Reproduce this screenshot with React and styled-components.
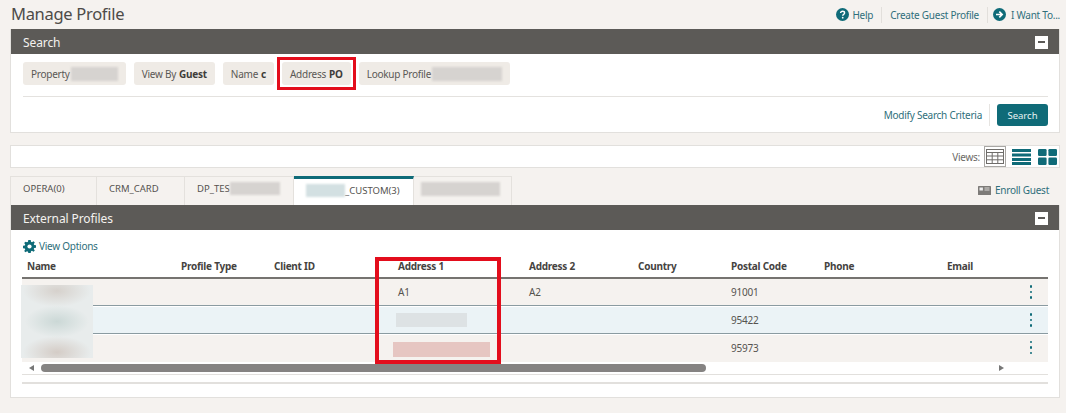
import React from "react";
import styled, { createGlobalStyle } from "styled-components";

const teal = "#0f6b78";
const linkText = "#2f6f7b";

const GlobalStyle = createGlobalStyle`
  html, body {
    margin: 0;
    padding: 0;
    background: #f5f2ef;
  }
  body {
    font-family: "Noto Sans", "Open Sans", "Liberation Sans", sans-serif;
    font-size: 10px;
    letter-spacing: -0.25px;
    color: #4a4845;
  }
`;

const Page = styled.div`
  position: relative;
  width: 1066px;
  height: 413px;
  overflow: hidden;
  box-sizing: border-box;
  padding: 0 6px 0 10px;
`;

const TopBar = styled.div`
  height: 29px;
  display: flex;
  align-items: center;
  justify-content: space-between;
`;

const PageTitle = styled.h1`
  margin: 0 0 0 1px;
  font-size: 16.5px;
  font-weight: 400;
  letter-spacing: -0.3px;
  color: #4d4b48;
  position: relative;
  top: -1px;
`;

const TopLinks = styled.div`
  display: flex;
  align-items: center;
`;

const TopLink = styled.a`
  display: flex;
  align-items: center;
  gap: 3px;
  height: 16px;
  padding: 0 8px;
  color: ${linkText};
  font-size: 10px;
  border-left: ${(p) => (p.$divided ? "1px solid #e2dfdb" : "none")};
  &:last-child {
    gap: 5px;
    padding-right: 0;
    padding-left: 5px;
  }
`;

const Panel = styled.section`
  background: #fff;
  border: 1px solid #e2e0dd;
  border-top: none;
  box-sizing: border-box;
  height: ${(p) => p.$height}px;
`;

const PanelHeader = styled.div`
  height: 25px;
  box-sizing: border-box;
  background: #5c5a57;
  display: flex;
  align-items: center;
  justify-content: space-between;
  padding: 1px 11px 0 12px;
  color: #f4f2ef;
  font-size: 12px;
  letter-spacing: -0.1px;
`;

const Collapse = styled.span`
  width: 13px;
  height: 13px;
  background: #fff;
  display: flex;
  align-items: center;
  justify-content: center;
  &::before {
    content: "";
    width: 7px;
    height: 2px;
    background: #5c5a57;
  }
`;

const ChipRow = styled.div`
  display: flex;
  align-items: center;
  gap: 8px;
  padding: 8px 0 0 12px;
  height: 23px;
`;

const Chip = styled.div`
  position: relative;
  height: 23px;
  box-sizing: border-box;
  display: flex;
  align-items: center;
  gap: ${(p) => p.$gap ?? 3}px;
  padding: 0 8px;
  background: #efebe6;
  border-radius: 3px;
  font-size: 10px;
  color: #5a5855;
  b {
    font-weight: 700;
    color: #3f3d3a;
  }
  ${(p) =>
    p.$flagged &&
    `
    &::after {
      content: "";
      position: absolute;
      inset: -5px;
      border: 3.5px solid #e30d1c;
    }
  `}
`;

const Smudge = styled.span`
  display: block;
  width: ${(p) => p.$w}px;
  height: ${(p) => p.$h ?? 14}px;
  background: ${(p) => p.$color ?? "#d6d3d0"};
  filter: blur(1px);
`;

const Rule = styled.div`
  height: 1px;
  background: #e4e2df;
  margin: 11px 11px 0 12px;
`;

const SearchFooter = styled.div`
  display: flex;
  justify-content: flex-end;
  align-items: center;
  padding: 7px 11px 0 0;
`;

const PlainLink = styled.a`
  color: ${linkText};
  font-size: 10px;
`;

const FooterDivider = styled.span`
  width: 1px;
  height: 22px;
  background: #e6e4e1;
  margin: 0 7px;
`;

const PrimaryButton = styled.button`
  width: 51px;
  height: 22px;
  border: none;
  border-radius: 3px;
  background: ${teal};
  color: #e8f2f3;
  font: inherit;
  font-size: 9.5px;
  padding: 0;
`;

const ViewsBar = styled.div`
  margin-top: 12px;
  height: 23px;
  box-sizing: border-box;
  background: #fff;
  border: 1px solid #e2e0dd;
  display: flex;
  align-items: center;
  justify-content: flex-end;
  padding-right: 1px;
  gap: 4px;
  font-size: 10px;
  color: #6b6966;
`;

const ViewButton = styled.span`
  width: 22px;
  height: 21px;
  display: flex;
  align-items: center;
  justify-content: center;
  box-sizing: border-box;
  border: ${(p) => (p.$active ? "1px solid #a9a7a4" : "none")};
`;

const TabRow = styled.div`
  margin-top: 8px;
  height: 29px;
  display: flex;
  align-items: stretch;
  justify-content: space-between;
`;

const Tabs = styled.div`
  display: flex;
`;

const Tab = styled.div`
  width: ${(p) => p.$w}px;
  box-sizing: border-box;
  padding: 0 0 ${(p) => (p.$active ? 3 : 5)}px ${(p) => p.$pad ?? 12}px;
  display: flex;
  align-items: center;
  font-size: 9.5px;
  letter-spacing: 0;
  color: #55534f;
  background: ${(p) => (p.$active ? "#fff" : "#f5f2ef")};
  border-right: 1px solid #e4e1dd;
  border-top: ${(p) => (p.$active ? `3px solid ${teal}` : "1px solid #e4e1dd")};
  &:first-child {
    border-left: 1px solid #e4e1dd;
  }
`;

const EnrollLink = styled.a`
  display: flex;
  align-items: center;
  gap: 4px;
  padding: 0 11px 1px 0;
  color: ${linkText};
  font-size: 10px;
`;

const ViewOptions = styled.a`
  display: flex;
  align-items: center;
  gap: 3px;
  color: ${linkText};
  font-size: 10px;
  height: 16px;
  padding: 8px 0 0 12px;
`;

const TableHead = styled.div`
  display: grid;
  grid-template-columns: 154px 93px 124px 131px 109px 93px 93px 123px 1fr;
  margin: 4px 11px 0 11px;
  padding: 0 0 3px 5px;
  height: 16px;
  align-items: center;
  border-bottom: 2px solid #757370;
  font-size: 10px;
  font-weight: 700;
  color: #45433f;
`;

const Row = styled.div`
  display: grid;
  grid-template-columns: 154px 93px 124px 131px 109px 93px 93px 123px 1fr 18px;
  margin: 0 11px ${(p) => (p.$last ? 0 : 1)}px;
  padding-bottom: ${(p) => (p.$last ? 2 : 0)}px;
  padding-left: 5px;
  box-sizing: border-box;
  height: ${(p) => (p.$last ? 27 : 27)}px;
  align-items: center;
  font-size: 10px;
  color: #55534f;
  background: ${(p) => (p.$selected ? "#ebf3f6" : "#f5f2ef")};
  border-bottom: ${(p) => (p.$last ? "none" : "1px solid #8a9ba1")};
`;

const Kebab = styled.span`
  display: flex;
  flex-direction: column;
  gap: 3px;
  align-items: center;
  justify-self: center;
  position: relative;
  left: -8px;
  i {
    width: 2.5px;
    height: 2.5px;
    border-radius: 50%;
    background: ${teal};
  }
`;

const ScrollBar = styled.div`
  margin: 0 11px;
  height: 12px;
  width: 983px;
  background: #fff;
  display: flex;
  align-items: center;
  gap: 7px;
  padding: 0 1px 0 7px;
  box-sizing: border-box;
`;

const Arrow = styled.span`
  width: 0;
  height: 0;
  border-top: 3px solid transparent;
  border-bottom: 3px solid transparent;
  border-right: ${(p) => (p.$dir === "left" ? "5px solid #777" : "none")};
  border-left: ${(p) => (p.$dir === "right" ? "5px solid #777" : "none")};
`;

const Thumb = styled.span`
  width: 665px;
  height: 8px;
  background: #858382;
  border-radius: 4px;
  margin-right: auto;
`;

const TableRule = styled.div`
  height: 1px;
  background: #e2e0dd;
  margin: 0 11px;
`;

const TableRuleLow = styled(TableRule)`
  height: 2px;
  margin-top: 7px;
`;

const NameSmudge = styled.div`
  position: absolute;
  left: 21px;
  top: 285px;
  width: 72px;
  height: 73px;
  background:
    radial-gradient(ellipse 32px 16px at 50% 50%, #cbd8d6, transparent),
    radial-gradient(ellipse 34px 16px at 50% 8%, #d6d1cc, transparent),
    radial-gradient(ellipse 34px 16px at 50% 92%, #d4ccc6, transparent),
    #e8ecec;
  filter: blur(0.6px);
`;

const ColumnSmudge = styled.div`
  position: absolute;
  left: ${(p) => p.$x}px;
  top: ${(p) => p.$y}px;
  width: ${(p) => p.$w}px;
  height: ${(p) => p.$h}px;
  background: ${(p) => p.$color};
  filter: blur(0.6px);
`;

const Callout = styled.div`
  position: absolute;
  left: 375px;
  top: 257px;
  width: 126px;
  height: 107px;
  box-sizing: border-box;
  border: 4px solid #e30d1c;
  pointer-events: none;
`;

function HelpIcon() {
  return (
    <svg width="13" height="13" viewBox="0 0 13 13">
      <circle cx="6.5" cy="6.5" r="6.5" fill={teal} />
      <path d="M4.6 5.1c0-1.2.9-1.9 2-1.9s2 .7 2 1.7c0 1.5-1.9 1.5-1.9 2.8" fill="none" stroke="#fff" strokeWidth="1.4" />
      <circle cx="6.7" cy="9.7" r="0.9" fill="#fff" />
    </svg>
  );
}

function ArrowIcon() {
  return (
    <svg width="13" height="13" viewBox="0 0 13 13">
      <circle cx="6.5" cy="6.5" r="6.5" fill={teal} />
      <path d="M3 6.5h6M6.3 3.6l2.9 2.9-2.9 2.9" fill="none" stroke="#fff" strokeWidth="1.6" />
    </svg>
  );
}

function GridIcon() {
  return (
    <svg width="18" height="15" viewBox="0 0 18 15" fill="none" stroke="#6f6d6a" strokeWidth="1">
      <rect x="0.5" y="0.5" width="17" height="14" />
      <path d="M0.5 3.5h17M0.5 7h17M0.5 10.8h17M6.2 3.5v11M11.8 3.5v11" />
    </svg>
  );
}

function ListIcon() {
  return (
    <svg width="19" height="16" viewBox="0 0 19 16" fill={teal}>
      <rect y="0" width="19" height="3" />
      <rect y="4.5" width="19" height="3" />
      <rect y="9" width="19" height="3" />
      <rect y="13" width="19" height="3" />
    </svg>
  );
}

function TilesIcon() {
  return (
    <svg width="19" height="16" viewBox="0 0 19 16" fill={teal}>
      <rect width="8.6" height="7" rx="1.2" />
      <rect x="10.4" width="8.6" height="7" rx="1.2" />
      <rect y="8.6" width="8.6" height="7.4" rx="1.2" />
      <rect x="10.4" y="8.6" width="8.6" height="7.4" rx="1.2" />
    </svg>
  );
}

function CardIcon() {
  return (
    <svg width="13" height="9" viewBox="0 0 13 9">
      <rect width="13" height="9" rx="0.6" fill="#7d7b78" />
      <rect x="1.5" y="1.5" width="3.4" height="3" fill="#eee" />
      <path d="M6.5 2h5M6.5 4h5" stroke="#e5e3e0" strokeWidth="0.9" />
    </svg>
  );
}

function GearIcon() {
  return (
    <svg width="13" height="13" viewBox="0 0 13 13">
      <path
        d="M5.3 0h2.4l.3 1.8 1 .45L10.5 1.2l1.3 1.3-1.05 1.5.45 1 1.8.3v2.4l-1.8.3-.45 1 1.05 1.5-1.3 1.3-1.5-1.05-1 .45-.3 1.8H5.3L5 11.7l-1-.45-1.5 1.05-1.3-1.3L2.25 9.5l-.45-1L0 8.2V5.8l1.8-.3.45-1L1.2 3l1.3-1.3L4 2.25l1-.45z"
        fill={teal}
      />
      <circle cx="6.5" cy="6.5" r="2.1" fill="#fff" />
    </svg>
  );
}

const columns = ["Name", "Profile Type", "Client ID", "Address 1", "Address 2", "Country", "Postal Code", "Phone", "Email"];

const rows = [
  { id: 1, address1: "A1", address2: "A2", postal: "91001" },
  { id: 2, address1: "", address2: "", postal: "95422", selected: true },
  { id: 3, address1: "", address2: "", postal: "95973", last: true },
];

export default function App() {
  return (
    <Page>
      <GlobalStyle />
      <TopBar>
        <PageTitle>Manage Profile</PageTitle>
        <TopLinks>
          <TopLink><HelpIcon />Help</TopLink>
          <TopLink $divided>Create Guest Profile</TopLink>
          <TopLink $divided><ArrowIcon />I Want To...</TopLink>
        </TopLinks>
      </TopBar>

      <Panel $height={104}>
        <PanelHeader>Search<Collapse /></PanelHeader>
        <ChipRow>
          <Chip $gap={1}>Property<Smudge $w={47} /></Chip>
          <Chip>View By <b>Guest</b></Chip>
          <Chip>Name <b>c</b></Chip>
          <Chip $flagged>Address <b>PO</b></Chip>
          <Chip $gap={1}>Lookup Profile<Smudge $w={70} /></Chip>
        </ChipRow>
        <Rule />
        <SearchFooter>
          <PlainLink>Modify Search Criteria</PlainLink>
          <FooterDivider />
          <PrimaryButton>Search</PrimaryButton>
        </SearchFooter>
      </Panel>

      <ViewsBar>
        Views:
        <ViewButton $active><GridIcon /></ViewButton>
        <ViewButton><ListIcon /></ViewButton>
        <ViewButton><TilesIcon /></ViewButton>
      </ViewsBar>

      <TabRow>
        <Tabs>
          <Tab $w={87}>OPERA(0)</Tab>
          <Tab $w={88}>CRM_CARD</Tab>
          <Tab $w={109}>DP_TES<Smudge $w={50} $h={13} /></Tab>
          <Tab $w={120} $active><Smudge $w={39} $h={13} $color="#d3e0e2" />_CUSTOM(3)</Tab>
          <Tab $w={98} $pad={7}><Smudge $w={79} $h={14} /></Tab>
        </Tabs>
        <EnrollLink><CardIcon />Enroll Guest</EnrollLink>
      </TabRow>

      <Panel $height={193}>
        <PanelHeader>External Profiles<Collapse /></PanelHeader>
        <ViewOptions><GearIcon />View Options</ViewOptions>
        <TableHead>
          {columns.map((name) => <span key={name}>{name}</span>)}
        </TableHead>
        {rows.map((row) => (
          <Row key={row.id} $selected={row.selected} $last={row.last}>
            <span />
            <span />
            <span />
            <span>{row.address1}</span>
            <span>{row.address2}</span>
            <span />
            <span>{row.postal}</span>
            <span />
            <span />
            <Kebab><i /><i /><i /></Kebab>
          </Row>
        ))}
        <ScrollBar>
          <Arrow $dir="left" />
          <Thumb />
          <Arrow $dir="right" />
        </ScrollBar>
        <TableRule />
        <TableRuleLow />
      </Panel>

      <NameSmudge />
      <ColumnSmudge $x={396} $y={313} $w={71} $h={14} $color="#dde2e4" />
      <ColumnSmudge $x={393} $y={342} $w={97} $h={15} $color="#e6c6c2" />
      <Callout />
    </Page>
  );
}
